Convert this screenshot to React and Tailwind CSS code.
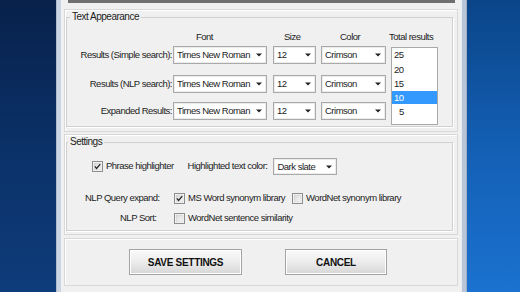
import React from "react";

const Arrow = () => (
  <svg width="6" height="4" viewBox="0 0 6 4" className="shrink-0">
    <path d="M0 0.5 L6 0.5 L3 3.5 Z" fill="#222" />
  </svg>
);

function Select({ w, h = "h-[18px]", text }) {
  return (
    <div className={`${w} ${h} bg-white border border-[#a9a9a9] flex items-center justify-between pl-[3px] pr-[4px] shadow-[inset_0_0_0_1px_#ececec]`}>
      <span className="leading-none">{text}</span>
      <Arrow />
    </div>
  );
}

function Check({ checked }) {
  return (
    <svg width="11" height="11" viewBox="0 0 11 11" className="shrink-0">
      <defs>
        <linearGradient id="cbg" x1="0" y1="0" x2="1" y2="1">
          <stop offset="0" stopColor="#d6d6d6" />
          <stop offset="1" stopColor="#fbfbfb" />
        </linearGradient>
      </defs>
      <rect x="0.5" y="0.5" width="10" height="10" fill="#fff" stroke="#8d8d8d" />
      <rect x="2" y="2" width="7" height="7" fill="url(#cbg)" stroke="#c9c9c9" strokeWidth="0.6" />
      {checked && (
        <path d="M2.8 5.4 L4.6 7.4 L8.2 3.2" fill="none" stroke="#262626" strokeWidth="1.3" />
      )}
    </svg>
  );
}

function Button({ w, children }) {
  return (
    <div className={`${w} h-[26px] border border-[#a3a3a3] bg-gradient-to-b from-[#fafafa] via-[#ececec] to-[#d6d6d6] flex items-center justify-center font-bold text-[10px] tracking-[-0.3px] text-[#111] shadow-[inset_0_0_0_1px_#ffffff]`}>
      {children}
    </div>
  );
}

export default function App() {
  const rows = [
    { label: "Results (Simple search):" },
    { label: "Results (NLP search):" },
    { label: "Expanded Results:" },
  ];
  const rowMt = ["mt-[3px]", "mt-[11px]", "mt-[9px]"];
  return (
    <div className="w-[520px] h-[292px] flex overflow-hidden font-['Liberation_Sans',Arial,sans-serif] text-[9.5px] tracking-[-0.5px] text-[#1c1c1c]">
      <div className="w-[56px] h-full bg-gradient-to-b from-[#08214b] via-[#0b3168] to-[#0e3c7a]" />
      <div className="w-[6px] h-full bg-[#cbd5e1] border-l border-[#aebbcc] border-r border-r-[#eef1f5]" />
      <div className="w-[399px] h-full bg-[#f0f0f0] flex flex-col">
        <div className="h-[3px] ml-[6px] mr-[6px] bg-[#6f6f6f]" />
        {/* Panel 1 */}
        <div className="mt-[6px] ml-[2px] mr-[3px] border border-[#d8d8d8] shadow-[inset_1px_1px_0_#ffffff] px-[1px] pt-[1px] pb-[4px]">
          <fieldset className="border border-[#d0d0d0] shadow-[1px_1px_0_#ffffff] mr-[3px]">
            <legend className="ml-[3px] px-[2px] leading-[12px] text-[10px]">Text Appearance</legend>
            <div className="flex items-start pb-[1px]">
              <div className="flex flex-col">
                <div className="flex h-[12px] mt-[8px] leading-[12px]">
                  <div className="w-[106px]" />
                  <div className="w-[94px] pl-[23px]">Font</div>
                  <div className="w-[43px] ml-[6px] pl-[11px]">Size</div>
                  <div className="w-[65px] ml-[5px] pl-[19px]">Color</div>
                </div>
                {rows.map((r, i) => (
                  <div key={i} className={`flex items-center ${rowMt[i]}`}>
                    <div className="w-[106px] text-right pr-[1px]">{r.label}</div>
                    <Select w="w-[94px]" text="Times New Roman" />
                    <div className="ml-[6px]"><Select w="w-[43px]" text="12" /></div>
                    <div className="ml-[5px]"><Select w="w-[65px]" text="Crimson" /></div>
                  </div>
                ))}
              </div>
              <div className="flex flex-col ml-[5px]">
                <div className="h-[12px] mt-[8px] leading-[12px] -ml-[2px]">Total results</div>
                <div className="mt-[4px] w-[47px] h-[78px] bg-white border border-[#a9a9a9] flex flex-col">
                  <div className="h-[14px] leading-[14px] pl-[2px]">25</div>
                  <div className="h-[15px] leading-[15px] pl-[2px]">20</div>
                  <div className="h-[14px] leading-[14px] pl-[2px]">15</div>
                  <div className="h-[13px] leading-[13px] pl-[2px] bg-[#3399ff] text-white">10</div>
                  <div className="h-[16px] leading-[16px] pl-[7px]">5</div>
                </div>
              </div>
            </div>
          </fieldset>
        </div>
        {/* Panel 2 */}
        <div className="mt-[2px] ml-[2px] mr-[3px] border border-[#d8d8d8] shadow-[inset_1px_1px_0_#ffffff] px-[1px] pt-[1px] pb-[3px]">
          <fieldset className="border border-[#d0d0d0] shadow-[1px_1px_0_#ffffff] mr-[3px] pb-[6px]">
            <legend className="ml-[1px] px-[2px] leading-[12px] text-[10px]">Settings</legend>
            <div className="flex items-center mt-[10px] h-[17px]">
              <div className="ml-[25px]"><Check checked /></div>
              <span className="ml-[3px]">Phrase highlighter</span>
              <span className="ml-[14px]">Highlighted text color:</span>
              <div className="ml-[6px]"><Select w="w-[64px]" h="h-[17px]" text="Dark slate" /></div>
            </div>
            <div className="flex items-center mt-[17px] h-[12px]">
              <div className="w-[107px] pl-[18px]">NLP Query expand:</div>
              <Check checked />
              <span className="ml-[3px]">MS Word synonym library</span>
              <div className="ml-[7px]"><Check /></div>
              <span className="ml-[3px]">WordNet synonym library</span>
            </div>
            <div className="flex items-center mt-[8px] h-[12px]">
              <div className="w-[107px] pl-[53px]">NLP Sort:</div>
              <Check />
              <span className="ml-[3px]">WordNet sentence similarity</span>
            </div>
          </fieldset>
        </div>
        {/* Panel 3 */}
        <div className="mt-[3px] ml-[2px] mr-[3px] h-[48px] border border-[#d8d8d8] shadow-[inset_1px_1px_0_#ffffff] flex items-start pt-[10px]">
          <div className="ml-[64px]"><Button w="w-[113px]">SAVE SETTINGS</Button></div>
          <div className="ml-[43px]"><Button w="w-[102px]">CANCEL</Button></div>
        </div>
      </div>
      <div className="w-[6px] h-full bg-[#b9c6d7] border-l border-[#e8edf3] border-r border-r-[#9fb0c6]" />
      <div className="flex-1 h-full bg-gradient-to-b from-[#0b4588] via-[#135fb4] to-[#1b72d0]" />
    </div>
  );
}
